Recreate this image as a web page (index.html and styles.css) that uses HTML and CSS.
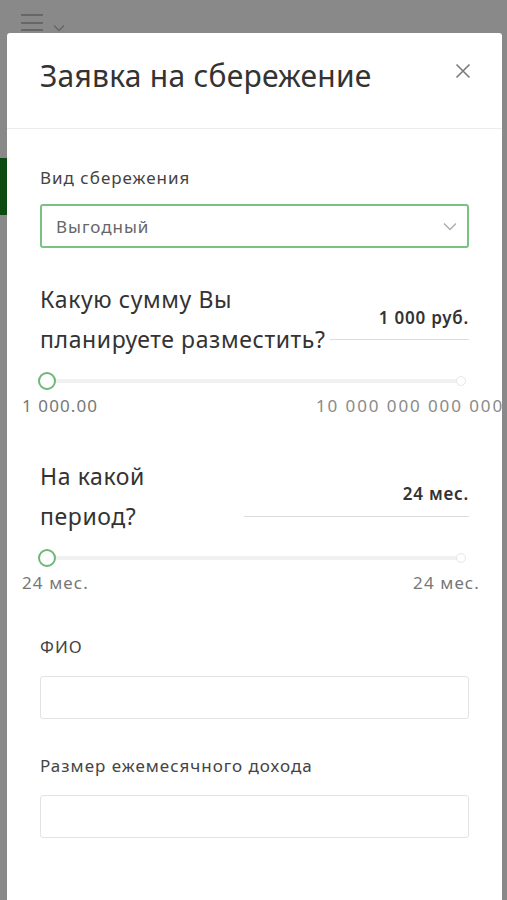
FILE: index.html
```html
<!DOCTYPE html>
<html lang="ru">
<head>
<meta charset="utf-8">
<link rel="stylesheet" href="styles.css">
</head>
<body>
<div class="topbar">
  <svg class="burger" width="26" height="20" viewBox="0 0 26 20"><path d="M1 2h22M1 10h22M1 17h22" stroke="#666" stroke-width="2.2" fill="none"/></svg>
  <svg class="caret" width="12" height="8" viewBox="0 0 12 8"><path d="M1 1.5l5 5 5-5" stroke="#666" stroke-width="1.5" fill="none"/></svg>
</div>
<div class="stage">
  <div class="side"><div class="greenbar"></div></div>
  <div class="modal">
    <div class="modal-head">
      <h1 class="title">Заявка на сбережение</h1>
      <svg class="close" width="16" height="16" viewBox="0 0 16 16"><path d="M1.5 1.5l13 13M14.5 1.5l-13 13" stroke="#7a7a7a" stroke-width="1.6" fill="none"/></svg>
    </div>
    <div class="modal-body">
      <div class="label first">Вид сбережения</div>
      <div class="select">
        <span>Выгодный</span>
        <svg width="14" height="9" viewBox="0 0 14 9"><path d="M1 1.5l6 6 6-6" stroke="#aaa" stroke-width="1.3" fill="none"/></svg>
      </div>

      <div class="question">
        <div class="q-text">Какую сумму Вы<br>планируете разместить?</div>
        <div class="q-value v1"><span>1 000 руб.</span></div>
      </div>
      <div class="slider">
        <div class="track"></div>
        <div class="knob"></div>
        <div class="end"></div>
      </div>
      <div class="range-labels">
        <span class="min">1 000.00</span>
        <span class="max long">10 000 000 000 000</span>
      </div>

      <div class="question q2">
        <div class="q-text">На какой<br>период?</div>
        <div class="q-value v2"><span>24 мес.</span></div>
      </div>
      <div class="slider">
        <div class="track"></div>
        <div class="knob"></div>
        <div class="end"></div>
      </div>
      <div class="range-labels">
        <span class="min">24 мес.</span>
        <span class="max">24 мес.</span>
      </div>

      <div class="label fio">ФИО</div>
      <div class="input"></div>
      <div class="label income">Размер ежемесячного дохода</div>
      <div class="input"></div>
    </div>
  </div>
  <div class="side right"></div>
</div>
</body>
</html>
```
FILE: styles.css
```css
* { box-sizing: border-box; }
html, body { margin: 0; padding: 0; }
body {
  background: #898989;
  font-family: "Noto Sans", "Open Sans", sans-serif;
  color: #333;
  width: 507px;
  height: 900px;
  overflow: hidden;
}
.topbar {
  height: 33px;
  display: flex;
  align-items: flex-start;
  padding: 13px 0 0 20px;
  gap: 7px;
}
.caret { margin-top: 11px; }
.stage {
  display: flex;
  height: 867px;
}
.side { width: 7px; flex: none; }
.side.right { width: 5px; }
.greenbar {
  margin-top: 125px;
  width: 7px;
  height: 57px;
  background: #0c4a10;
}
.modal {
  flex: 1;
  background: #fff;
  border-radius: 3px 3px 0 0;
  overflow: hidden;
}
.modal-head {
  display: flex;
  justify-content: space-between;
  align-items: flex-start;
  padding: 23px 31px 0 33px;
  height: 96px;
  border-bottom: 1px solid #ececec;
}
.title {
  margin: 0;
  font-weight: 400;
  font-size: 30px;
  line-height: 40px;
  color: #333;
  letter-spacing: 0.25px;
}
.close { margin-top: 7px; }
.modal-body {
  padding: 0 33px;
}
.label {
  font-size: 17px;
  line-height: 20px;
  letter-spacing: 1px;
  color: #444;
}
.label.first { margin-top: 39px; }
.select {
  margin-top: 16px;
  height: 44px;
  border: 2px solid #79c283;
  border-radius: 3px;
  display: flex;
  align-items: center;
  justify-content: space-between;
  padding: 0 10px 0 14px;
  font-size: 17px;
  letter-spacing: 1px;
  color: #666;
}
.question {
  display: flex;
  align-items: flex-end;
  justify-content: space-between;
  margin-top: 31px;
}
.q-text {
  font-size: 23px;
  line-height: 40px;
  letter-spacing: 0.6px;
  color: #333;
  white-space: nowrap;
}
.q-value {
  flex: none;
  border-bottom: 1px solid #dcdcdc;
  text-align: right;
  font-size: 17px;
  font-weight: 600;
  letter-spacing: 0.8px;
  color: #333;
  padding-bottom: 10px;
  margin-bottom: 19px;
}
.q-value.v1 { width: 139px; }
.q-value.v2 { width: 225px; margin-bottom: 19px; padding-bottom: 11px; }
.q2 { margin-top: 40px; }
.slider {
  position: relative;
  height: 20px;
  margin-top: 12px;
}
.track {
  position: absolute;
  left: 7px; right: 8px; top: 8px;
  height: 4px;
  background: #f1f1f1;
  border-radius: 2px;
}
.knob {
  position: absolute;
  left: -2px; top: 1px;
  width: 18px; height: 18px;
  border: 2px solid #6db777;
  background: #fff;
  border-radius: 50%;
}
.end {
  position: absolute;
  right: 3px; top: 5px;
  width: 10px; height: 10px;
  border: 1px solid #e6e6e6;
  background: #fff;
  border-radius: 50%;
}
.range-labels {
  display: flex;
  justify-content: space-between;
  font-size: 17px;
  line-height: 20px;
  letter-spacing: 1.1px;
  color: #777;
  margin: 5px -11px 0 -18px;
  white-space: nowrap;
}
.range-labels .long {
  flex: none;
  width: 186px;
  margin-right: -22px;
  text-align: left;
  letter-spacing: 1.9px;
  color: #8a8a8a;
}
.label.fio { margin-top: 44px; }
.label.income { margin-top: 37px; }
.input {
  margin-top: 19px;
  height: 43px;
  border: 1px solid #e3e3e3;
  border-radius: 3px;
}
```
